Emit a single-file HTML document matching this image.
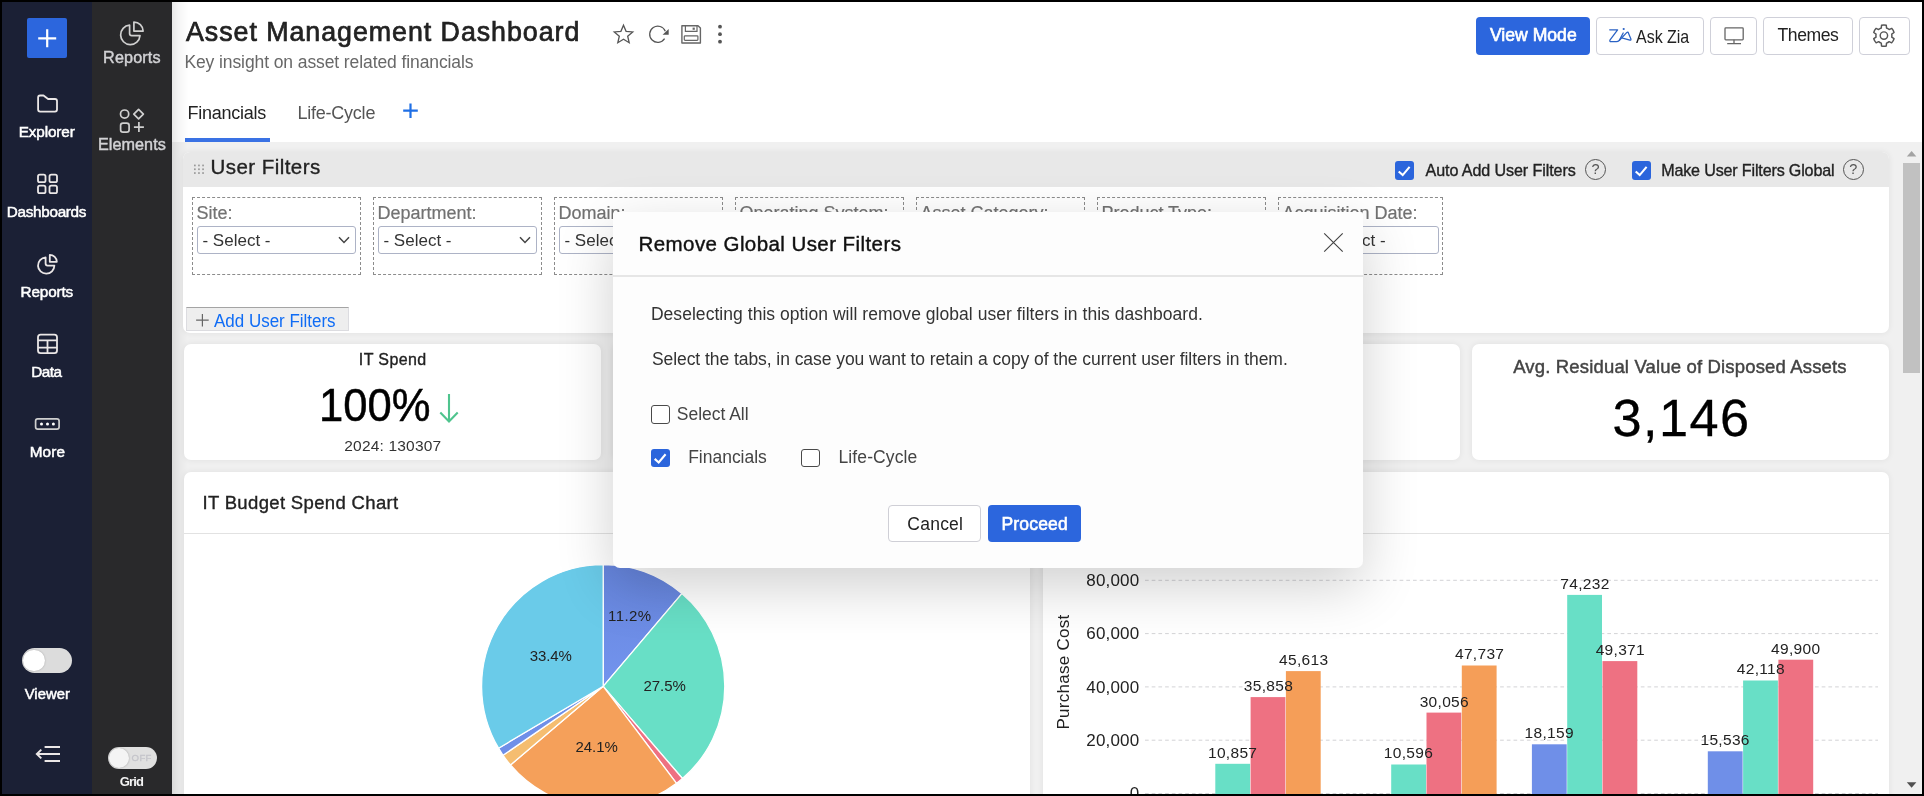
<!DOCTYPE html>
<html>
<head>
<meta charset="utf-8">
<title>Asset Management Dashboard</title>
<style>
*{box-sizing:border-box;margin:0;padding:0}
html,body{width:1924px;height:796px;overflow:hidden;background:#000;font-family:"Liberation Sans",sans-serif;}
.abs{position:absolute}
#frame{position:absolute;left:2px;top:2px;width:1920px;height:792px;background:#fff;overflow:hidden}
#page{position:absolute;left:-2px;top:-2px;width:1924px;height:796px;will-change:transform}
#nav1{position:absolute;left:2px;top:2px;width:90px;height:792px;background:#1b2035}
#nav2{position:absolute;left:92px;top:2px;width:80px;height:792px;background:#29292b}
#contentbg{position:absolute;left:172px;top:142px;width:1750px;height:652px;background:#f0f0f0}
.card{position:absolute;background:#fff;border-radius:7px;box-shadow:0 0 6px rgba(0,0,0,.07)}
.t{position:absolute;white-space:nowrap;line-height:1}
.fbox{position:absolute;top:197px;height:78px;width:169px;border:1px dashed #8c8c8c}
.fbox .lbl{position:absolute;left:3.4px;top:6px;font-size:18px;color:#727272;white-space:nowrap;line-height:1;-webkit-text-stroke:0.2px #727272}
.fbox .sel{position:absolute;left:4.1px;top:28px;width:158.7px;height:27.8px;border:1px solid #adb3c6;border-radius:3px;background:#fff}
.fbox .sel span{position:absolute;left:4.4px;top:5px;font-size:17px;color:#333;white-space:nowrap;line-height:1}
.fbox .sel svg{position:absolute;right:5px;top:8.6px}
.btn{position:absolute;top:17px;height:38px;border:1px solid #cfd0d9;border-radius:4px;background:#fff}
.cb{position:absolute;width:19px;height:19px;border-radius:3px}
.cb.on{background:#2b65dc}
.cb.off{background:#fff;border:1.3px solid #4a4a4a}
.cb svg{position:absolute;left:0;top:0}
.help{position:absolute;width:21px;height:21px;border:1.2px solid #555;border-radius:50%;color:#555;font-size:14.5px;line-height:18.5px;text-align:center}
</style>
</head>
<body>
<div id="frame"><div id="page">

<div id="contentbg"></div>
<div id="nav1"></div>
<div id="nav2"></div>

<div class="abs" style="left:172px;top:2px;width:16px;height:792px;background:linear-gradient(to right,rgba(0,0,0,.09),rgba(0,0,0,.035) 45%,rgba(0,0,0,0))"></div>
<!-- ===== NAV ICONS ===== -->
<div class="abs" style="left:27px;top:18px;width:40px;height:40px;border-radius:2px;background:#2c66dd"></div>
<svg class="abs" style="left:0;top:0" width="180" height="796" viewBox="0 0 180 796" fill="none" stroke-linecap="round" stroke-linejoin="round">
  <!-- plus -->
  <path d="M38.2 38.3H56.2M47.2 29.3V47.3" stroke="#fff" stroke-width="2.2" stroke-linecap="butt"/>
  <g stroke="#ebe7e7" stroke-width="1.8">
  <!-- folder -->
  <path d="M40.1 95.5H43.5L48.1 99H55a2 2 0 0 1 2 2V109.6a2 2 0 0 1-2 2H40.1a2 2 0 0 1-2-2V97.5a2 2 0 0 1 2-2z"/>
  <!-- dashboards -->
  <rect x="38" y="174.7" width="7.5" height="7.5" rx="1.8"/><rect x="49.5" y="174.7" width="7.5" height="7.5" rx="1.8"/>
  <rect x="38" y="185.7" width="7.5" height="7.5" rx="1.8"/><rect x="49.5" y="185.7" width="7.5" height="7.5" rx="1.8"/>
  <!-- reports -->
  <path d="M45.6 257.3A8.2 8.2 0 1 0 54.4 265.6H47.6a2 2 0 0 1-2-2z"/>
  <path d="M49.8 254.9A7 7 0 0 1 56.8 261.8H49.8z"/>
  <!-- data -->
  <rect x="38" y="334.7" width="19" height="18.5" rx="2.6"/>
  <path d="M38 340.3H57M38 347.6H57M47.5 340.3V353.2" stroke-linecap="butt"/>
  </g>
  <!-- more -->
  <rect x="35.6" y="418.8" width="23.5" height="10.4" rx="2.2" stroke="#cfcfcf" stroke-width="1.7"/>
  <circle cx="41.5" cy="424" r="1.5" fill="#fff"/><circle cx="47.5" cy="424" r="1.5" fill="#fff"/><circle cx="53.4" cy="424" r="1.5" fill="#fff"/>
  <!-- collapse -->
  <path d="M44.6 747H60M37.4 754H60M44.6 761H60M41.3 749.6L36.8 754L41.3 758.4" stroke="#ebe7e7" stroke-width="1.9" stroke-linecap="butt" stroke-linejoin="miter"/>
  <!-- nav2 reports -->
  <g stroke="#d0d0d0" stroke-width="1.7">
  <path d="M129.6 25.2A9.7 9.7 0 1 0 140 35.6H131.8a2.2 2.2 0 0 1-2.2-2.2z"/>
  <path d="M133.9 22.1A9.2 9.2 0 0 1 143.1 31.1H133.9z"/>
  <!-- elements -->
  <circle cx="124.6" cy="114.1" r="4.1"/>
  <path d="M138.6 109.3 L143.4 114.1 L138.6 118.9 L133.8 114.1Z" stroke-width="1.7"/>
  <rect x="120.6" y="123.2" width="8.5" height="8.9" rx="2.4"/>
  <path d="M133.9 127.1H143.9M138.9 122.1V132.1" stroke-linecap="butt"/>
  </g>
</svg>
<!-- viewer toggle -->
<div class="abs" style="left:21.8px;top:647.7px;width:50.4px;height:25.6px;border-radius:13px;background:#dcdcdc"></div>
<div class="abs" style="left:23.3px;top:649.7px;width:21.4px;height:21.4px;border-radius:50%;background:#fff;box-shadow:0 0 2px rgba(0,0,0,.25)"></div>
<!-- grid toggle -->
<div class="abs" style="left:107.8px;top:746.8px;width:49.3px;height:22px;border-radius:11px;background:#e0e0e0"></div>
<div class="abs" style="left:108.5px;top:747.5px;width:20.6px;height:20.6px;border-radius:50%;background:#f4f4f4;box-shadow:0 0 2px rgba(0,0,0,.3)"></div>

<!-- ===== HEADER ===== -->
<div class="abs" style="left:185px;top:138px;width:85px;height:4px;background:#3a72e4"></div>
<svg class="abs" style="left:0;top:0" width="1924" height="130" viewBox="0 0 1924 130" fill="none">
  <path d="M403.2 110.7H417.8M410.5 103.4V118" stroke="#1f6fe5" stroke-width="2.2"/>
  <path d="M623.50 25.20L626.09 31.34L632.73 31.90L627.68 36.26L629.20 42.75L623.50 39.30L617.80 42.75L619.32 36.26L614.27 31.90L620.91 31.34Z" stroke="#555" stroke-width="1.3" stroke-linejoin="miter"/>
  <!-- refresh -->
  <path d="M665.3 31.2A8.1 8.1 0 1 0 664.6 38.6" stroke="#555" stroke-width="1.25"/>
  <path d="M668.7 28.9V34.7H662.6Z" fill="#555"/>
  <!-- save -->
  <path d="M681.9 25.7H698L700.4 28.1V43H681.9Z" stroke="#666" stroke-width="1.4" stroke-linejoin="round"/>
  <path d="M685.4 25.7V31.4H697V25.7" stroke="#666" stroke-width="1.2"/>
  <rect x="692.6" y="27.6" width="2.2" height="2.2" fill="#666"/>
  <rect x="684.3" y="35.8" width="13.6" height="4.6" rx="0.8" stroke="#666" stroke-width="1.2"/>
  <path d="M682 43.2H700.4" stroke="#888" stroke-width="1"/>
  <!-- kebab -->
  <circle cx="720" cy="26.7" r="1.9" fill="#555"/><circle cx="720" cy="34.2" r="1.9" fill="#555"/><circle cx="720" cy="41.7" r="1.9" fill="#555"/>
</svg>
<div class="abs" style="left:1476px;top:17px;width:114px;height:38px;border-radius:4px;background:#2c66dd"></div>
<div class="btn" style="left:1596.4px;width:107.4px"></div>
<div class="btn" style="left:1710.2px;width:46.4px"></div>
<div class="btn" style="left:1763.4px;width:89.4px"></div>
<div class="btn" style="left:1859px;width:50.8px"></div>
<svg class="abs" style="left:0;top:0" width="1924" height="70" viewBox="0 0 1924 70" fill="none">
  <!-- zia -->
  <g stroke="#2a62c4" stroke-width="1.25" stroke-linecap="round" stroke-linejoin="round">
  <path d="M1609.7 29.8H1617.6L1609.9 40.2Q1609.5 41.6 1611 41.7H1616.4Q1618 41.7 1619.2 40.5L1626.9 32.4Q1627.8 31.7 1628.4 32.9L1630.9 39Q1631.2 40.4 1629.9 40.1L1621.7 37.8"/>
  <path d="M1623.2 33L1619.3 40.4"/>
  </g>
  <circle cx="1623.7" cy="29" r="1.1" fill="#2a62c4"/>
  <!-- monitor -->
  <rect x="1725" y="27.9" width="18.2" height="11.9" rx="0.8" stroke="#666" stroke-width="1.3"/>
  <path d="M1734 39.8V43.6M1727.2 43.6H1741" stroke="#666" stroke-width="1.3"/>
  <!-- gear -->
  <path d="M1881.30 28.04L1881.52 25.27A10.6 10.6 0 0 1 1886.28 25.27L1886.50 28.04A8.0 8.0 0 0 1 1889.15 29.56L1891.65 28.37A10.6 10.6 0 0 1 1894.04 32.50L1891.75 34.07A8.0 8.0 0 0 1 1891.75 37.13L1894.04 38.70A10.6 10.6 0 0 1 1891.65 42.83L1889.15 41.64A8.0 8.0 0 0 1 1886.50 43.16L1886.28 45.93A10.6 10.6 0 0 1 1881.52 45.93L1881.30 43.16A8.0 8.0 0 0 1 1878.65 41.64L1876.15 42.83A10.6 10.6 0 0 1 1873.76 38.70L1876.05 37.13A8.0 8.0 0 0 1 1876.05 34.07L1873.76 32.50A10.6 10.6 0 0 1 1876.15 28.37L1878.65 29.56A8.0 8.0 0 0 1 1881.30 28.04Z" stroke="#555" stroke-width="1.45" stroke-linejoin="round"/>
  <circle cx="1883.9" cy="35.6" r="3.7" stroke="#555" stroke-width="1.45"/>
</svg>

<!-- ===== USER FILTERS ===== -->
<div class="card" style="left:183.3px;top:151.8px;width:1706.2px;height:181px;overflow:hidden">
  <div class="abs" style="left:0;top:0;width:100%;height:35px;background:#e8e8e8"></div>
</div>
<svg class="abs" style="left:190px;top:160px" width="20" height="20" viewBox="190 160 20 20">
  <g fill="#999"><rect x="194" y="164.6" width="1.7" height="1.7"/><rect x="198.1" y="164.6" width="1.7" height="1.7"/><rect x="202.2" y="164.6" width="1.7" height="1.7"/>
  <rect x="194" y="168.4" width="1.7" height="1.7"/><rect x="198.1" y="168.4" width="1.7" height="1.7"/><rect x="202.2" y="168.4" width="1.7" height="1.7"/>
  <rect x="194" y="172.2" width="1.7" height="1.7"/><rect x="198.1" y="172.2" width="1.7" height="1.7"/><rect x="202.2" y="172.2" width="1.7" height="1.7"/></g>
</svg>
<div class="cb on" style="left:1395px;top:160.7px"><svg width="19" height="19" viewBox="0 0 19 19"><path d="M3.7 10.5L7.7 14.1L14.6 5.9" fill="none" stroke="#fff" stroke-width="2.1"/></svg></div>
<div class="cb on" style="left:1631.6px;top:160.7px"><svg width="19" height="19" viewBox="0 0 19 19"><path d="M3.7 10.5L7.7 14.1L14.6 5.9" fill="none" stroke="#fff" stroke-width="2.1"/></svg></div>
<div class="help" style="left:1585.1px;top:159.4px">?</div>
<div class="help" style="left:1842.9px;top:159.4px">?</div>

<div class="fbox" style="left:192px"><div class="lbl">Site:</div><div class="sel"><span>- Select -</span><svg width="12" height="8" viewBox="0 0 12 8"><path d="M1 1.2L6 6.4L11 1.2" fill="none" stroke="#444" stroke-width="1.5"/></svg></div></div>
<div class="fbox" style="left:373px"><div class="lbl">Department:</div><div class="sel"><span>- Select -</span><svg width="12" height="8" viewBox="0 0 12 8"><path d="M1 1.2L6 6.4L11 1.2" fill="none" stroke="#444" stroke-width="1.5"/></svg></div></div>
<div class="fbox" style="left:554px"><div class="lbl">Domain:</div><div class="sel"><span>- Select -</span></div></div>
<div class="fbox" style="left:735px"><div class="lbl">Operating System:</div><div class="sel"><span>- Select -</span></div></div>
<div class="fbox" style="left:916px"><div class="lbl">Asset Category:</div><div class="sel"><span>- Select -</span></div></div>
<div class="fbox" style="left:1097px"><div class="lbl">Product Type:</div><div class="sel"><span>- Select -</span></div></div>
<div class="fbox" style="left:1278px;width:165px"><div class="lbl">Acquisition Date:</div><div class="sel" style="width:156px"><span style="left:33.5px">- Select -</span></div></div>

<div class="abs" style="left:186px;top:307.2px;width:163px;height:23.8px;background:#eeeeee;border:1px solid #dcdce0;border-top:1px solid #a4a4a4"></div>
<svg class="abs" style="left:190px;top:310px" width="24" height="20" viewBox="190 310 24 20"><path d="M196.1 320.2H208.7M202.4 313.9V326.5" stroke="#666" stroke-width="1.2" fill="none"/></svg>

<!-- ===== KPI CARDS ===== -->
<div class="card" style="left:184px;top:344px;width:417.2px;height:116px"></div>
<div class="card" style="left:613.2px;top:344px;width:417.2px;height:116px"></div>
<div class="card" style="left:1042.5px;top:344px;width:417.2px;height:116px"></div>
<div class="card" style="left:1471.8px;top:344px;width:417.2px;height:116px"></div>
<svg class="abs" style="left:430px;top:385px" width="40" height="45" viewBox="430 385 40 45"><path d="M449 394V421.4M440.3 412.6L449 421.6L457.7 412.6" fill="none" stroke="#4fc48e" stroke-width="2.1"/></svg>

<!-- ===== CHART CARDS ===== -->
<div class="card" style="left:184px;top:472px;width:846.4px;height:340px"></div>
<div class="card" style="left:1042.5px;top:472px;width:846.5px;height:340px"></div>
<div class="abs" style="left:184px;top:533px;width:846.4px;height:1px;background:#e2e2e2"></div>
<div class="abs" style="left:1042.5px;top:533px;width:846.5px;height:1px;background:#e2e2e2"></div>
<svg class="abs" style="left:0;top:0" width="1924" height="796" viewBox="0 0 1924 796"><defs><linearGradient id="gB" x1="0" y1="0" x2="0" y2="1"><stop offset="0" stop-color="#6685dd"/><stop offset="1" stop-color="#7394ee"/></linearGradient></defs><path d="M603.2 686.3 L603.20 564.70 A121.6 121.6 0 0 1 681.88 593.59 Z" fill="url(#gB)" stroke="#fff" stroke-width="1.3" stroke-linejoin="round"/><path d="M603.2 686.3 L681.88 593.59 A121.6 121.6 0 0 1 682.46 778.52 Z" fill="#68dfc6" stroke="#fff" stroke-width="1.3" stroke-linejoin="round"/><path d="M603.2 686.3 L682.46 778.52 A121.6 121.6 0 0 1 676.52 783.31 Z" fill="#ee7182" stroke="#fff" stroke-width="1.3" stroke-linejoin="round"/><path d="M603.2 686.3 L676.52 783.31 A121.6 121.6 0 0 1 510.49 764.98 Z" fill="#f5a05a" stroke="#fff" stroke-width="1.3" stroke-linejoin="round"/><path d="M603.2 686.3 L510.49 764.98 A121.6 121.6 0 0 1 503.06 755.28 Z" fill="#f5bd70" stroke="#fff" stroke-width="1.3" stroke-linejoin="round"/><path d="M603.2 686.3 L503.06 755.28 A121.6 121.6 0 0 1 498.53 748.20 Z" fill="#6f8fe8" stroke="#fff" stroke-width="1.3" stroke-linejoin="round"/><path d="M603.2 686.3 L498.53 748.20 A121.6 121.6 0 0 1 603.20 564.70 Z" fill="#6acbe9" stroke="#fff" stroke-width="1.3" stroke-linejoin="round"/></svg>
<svg class="abs" style="left:0;top:0" width="1924" height="796" viewBox="0 0 1924 796"><line x1="1145" x2="1878" y1="580.3" y2="580.3" stroke="#d3d3d6" stroke-width="1" stroke-dasharray="3.7 3"/><line x1="1145" x2="1878" y1="633.6" y2="633.6" stroke="#d3d3d6" stroke-width="1" stroke-dasharray="3.7 3"/><line x1="1145" x2="1878" y1="686.9" y2="686.9" stroke="#d3d3d6" stroke-width="1" stroke-dasharray="3.7 3"/><line x1="1145" x2="1878" y1="740.2" y2="740.2" stroke="#d3d3d6" stroke-width="1" stroke-dasharray="3.7 3"/><line x1="1145" x2="1878" y1="793.5" y2="793.5" stroke="#d3d3d6" stroke-width="1" stroke-dasharray="3.7 3"/><rect x="1215.3" y="763.8" width="34.8" height="32.2" fill="#68dfc6"/><rect x="1250.6" y="697.1" width="34.8" height="98.9" fill="#ee7182"/><rect x="1285.9" y="671.1" width="34.8" height="124.9" fill="#f59e58"/><rect x="1391.2" y="764.5" width="34.8" height="31.5" fill="#68dfc6"/><rect x="1426.5" y="712.6" width="34.8" height="83.4" fill="#ee7182"/><rect x="1461.8" y="665.5" width="34.8" height="130.5" fill="#f59e58"/><rect x="1531.9" y="744.3" width="34.8" height="51.7" fill="#6f8fe8"/><rect x="1567.2" y="594.9" width="34.8" height="201.1" fill="#68dfc6"/><rect x="1602.5" y="661.1" width="34.8" height="134.9" fill="#ee7182"/><rect x="1707.8" y="751.3" width="34.8" height="44.7" fill="#6f8fe8"/><rect x="1743.1" y="680.5" width="34.8" height="115.5" fill="#68dfc6"/><rect x="1778.4" y="659.7" width="34.8" height="136.3" fill="#ee7182"/></svg>
<div class="t" style="left:1063px;top:672.2px;font-size:17px;color:#222;letter-spacing:0.27px;transform:translate(-50%,-50%) rotate(-90deg);">Purchase Cost</div>

<!-- ===== SCROLLBAR ===== -->
<div class="abs" style="left:1901px;top:142px;width:21px;height:652px;background:#f0f0f0"></div>
<div class="abs" style="left:1903px;top:163px;width:17px;height:210px;background:#c1c1c1"></div>
<svg class="abs" style="left:1901px;top:142px" width="21" height="652" viewBox="0 0 21 652"><path d="M5.8 14.5L10.6 9L15.4 14.5Z" fill="#a3a3a3"/><path d="M5.8 640.3L10.6 645.8L15.4 640.3Z" fill="#505050"/></svg>

<div class="t" style="left:18.70px;top:124px;font-size:15.3px;color:#ffffff;letter-spacing:-0.124px;-webkit-text-stroke:0.5px #ffffff;">Explorer</div>
<div class="t" style="left:6.80px;top:204px;font-size:15.3px;color:#ffffff;letter-spacing:-0.315px;-webkit-text-stroke:0.5px #ffffff;">Dashboards</div>
<div class="t" style="left:20.60px;top:284px;font-size:15.3px;color:#ffffff;letter-spacing:-0.152px;-webkit-text-stroke:0.5px #ffffff;">Reports</div>
<div class="t" style="left:31.20px;top:364px;font-size:15.3px;color:#ffffff;letter-spacing:-0.535px;-webkit-text-stroke:0.5px #ffffff;">Data</div>
<div class="t" style="left:29.70px;top:444px;font-size:15.3px;color:#ffffff;letter-spacing:0.152px;-webkit-text-stroke:0.5px #ffffff;">More</div>
<div class="t" style="left:24.70px;top:687px;font-size:14.8px;color:#ffffff;letter-spacing:0.053px;-webkit-text-stroke:0.5px #ffffff;">Viewer</div>
<div class="t" style="left:103.10px;top:49px;font-size:16.2px;color:#d2d2d5;letter-spacing:0.119px;-webkit-text-stroke:0.45px #d2d2d5;">Reports</div>
<div class="t" style="left:98.00px;top:136px;font-size:16.2px;color:#d2d2d5;letter-spacing:0.045px;-webkit-text-stroke:0.45px #d2d2d5;">Elements</div>
<div class="t" style="left:119.70px;top:775px;font-size:13px;color:#f4f4f4;letter-spacing:-0.794px;font-weight:bold;">Grid</div>
<div class="t" style="left:131.60px;top:753px;font-size:9.6px;color:#c4c4ca;letter-spacing:0.339px;-webkit-text-stroke:0.3px #c4c4ca;">OFF</div>
<div class="t" style="left:186.00px;top:19px;font-size:26.8px;color:#222;letter-spacing:0.956px;-webkit-text-stroke:0.7px #222;">Asset Management Dashboard</div>
<div class="t" style="left:184.40px;top:54px;font-size:17.5px;color:#686868;letter-spacing:-0.096px;">Key insight on asset related financials</div>
<div class="t" style="left:187.60px;top:104px;font-size:18px;color:#222;letter-spacing:-0.271px;">Financials</div>
<div class="t" style="left:297.40px;top:104px;font-size:18px;color:#555;letter-spacing:-0.224px;">Life-Cycle</div>
<div class="t" style="left:1489.90px;top:27px;font-size:17.6px;color:#fff;letter-spacing:0.009px;-webkit-text-stroke:0.65px #fff;">View Mode</div>
<div class="t" style="left:1636.30px;top:29px;font-size:17.7px;color:#222;transform:scaleX(0.9031);transform-origin:0 0;">Ask Zia</div>
<div class="t" style="left:1777.60px;top:27px;font-size:17.6px;color:#222;letter-spacing:-0.471px;">Themes</div>
<div class="t" style="left:210.60px;top:157px;font-size:20.5px;color:#222;letter-spacing:0.433px;-webkit-text-stroke:0.35px #222;">User Filters</div>
<div class="t" style="left:1425.60px;top:162px;font-size:16.1px;color:#222;letter-spacing:-0.095px;-webkit-text-stroke:0.35px #222;">Auto Add User Filters</div>
<div class="t" style="left:1661.20px;top:162px;font-size:16.1px;color:#222;letter-spacing:-0.161px;-webkit-text-stroke:0.35px #222;">Make User Filters Global</div>
<div class="t" style="left:214.00px;top:312px;font-size:18px;color:#0f6cf5;transform:scaleX(0.9424);transform-origin:0 0;">Add User Filters</div>
<div class="t" style="left:358.80px;top:352px;font-size:16px;color:#222;letter-spacing:0.396px;-webkit-text-stroke:0.35px #222;">IT Spend</div>
<div class="t" style="left:318.72px;top:381px;font-size:47px;color:#000;transform:scaleX(0.9277);transform-origin:0 0;-webkit-text-stroke:0.5px #000;">100%</div>
<div class="t" style="left:344.30px;top:438px;font-size:15.5px;color:#333;letter-spacing:0.182px;">2024: 130307</div>
<div class="t" style="left:1513.20px;top:358px;font-size:18.5px;color:#444;letter-spacing:0.164px;-webkit-text-stroke:0.45px #444;">Avg. Residual Value of Disposed Assets</div>
<div class="t" style="left:1612.60px;top:392px;font-size:52.3px;color:#000;letter-spacing:1.379px;-webkit-text-stroke:0.3px #000;">3,146</div>
<div class="t" style="left:202.40px;top:494px;font-size:18.5px;color:#222;letter-spacing:0.346px;-webkit-text-stroke:0.35px #222;">IT Budget Spend Chart</div>
<div class="t" style="left:638.50px;top:234px;font-size:20.5px;color:#111;letter-spacing:0.427px;-webkit-text-stroke:0.4px #111;z-index:12;">Remove Global User Filters</div>
<div class="t" style="left:650.90px;top:306px;font-size:17.5px;color:#333;letter-spacing:0.045px;z-index:12;">Deselecting this option will remove global user filters in this dashboard.</div>
<div class="t" style="left:651.90px;top:351px;font-size:17.5px;color:#333;letter-spacing:-0.060px;z-index:12;">Select the tabs, in case you want to retain a copy of the current user filters in them.</div>
<div class="t" style="left:676.80px;top:406px;font-size:17.5px;color:#444;letter-spacing:-0.029px;z-index:12;">Select All</div>
<div class="t" style="left:688.20px;top:449px;font-size:17.5px;color:#444;letter-spacing:-0.015px;z-index:12;">Financials</div>
<div class="t" style="left:838.50px;top:449px;font-size:17.5px;color:#444;letter-spacing:0.115px;z-index:12;">Life-Cycle</div>
<div class="t" style="left:907.30px;top:516px;font-size:17.5px;color:#222;letter-spacing:0.243px;z-index:12;">Cancel</div>
<div class="t" style="left:1001.40px;top:516px;font-size:17.5px;color:#fff;letter-spacing:0.192px;-webkit-text-stroke:0.6px #fff;z-index:12;">Proceed</div>
<div class="t" style="left:608.00px;top:608px;font-size:15px;color:#222;letter-spacing:0.430px;">11.2%</div>
<div class="t" style="left:529.80px;top:648px;font-size:15px;color:#222;letter-spacing:-0.099px;">33.4%</div>
<div class="t" style="left:643.60px;top:678px;font-size:15px;color:#222;letter-spacing:-0.099px;">27.5%</div>
<div class="t" style="left:575.60px;top:739px;font-size:15px;color:#222;letter-spacing:-0.099px;">24.1%</div>
<div class="t" style="left:1086.30px;top:572px;font-size:17px;color:#222;letter-spacing:0.172px;">80,000</div>
<div class="t" style="left:1086.30px;top:625px;font-size:17px;color:#222;letter-spacing:0.172px;">60,000</div>
<div class="t" style="left:1086.30px;top:679px;font-size:17px;color:#222;letter-spacing:0.172px;">40,000</div>
<div class="t" style="left:1086.30px;top:732px;font-size:17px;color:#222;letter-spacing:0.172px;">20,000</div>
<div class="t" style="left:1129.70px;top:785px;font-size:17px;color:#222;">0</div>
<div class="t" style="left:1207.95px;top:745px;font-size:15.5px;color:#222;letter-spacing:0.321px;">10,857</div>
<div class="t" style="left:1243.74px;top:678px;font-size:15.5px;color:#222;letter-spacing:0.328px;">35,858</div>
<div class="t" style="left:1279.04px;top:652px;font-size:15.5px;color:#222;letter-spacing:0.328px;">45,613</div>
<div class="t" style="left:1383.85px;top:745px;font-size:15.5px;color:#222;letter-spacing:0.321px;">10,596</div>
<div class="t" style="left:1419.64px;top:694px;font-size:15.5px;color:#222;letter-spacing:0.328px;">30,056</div>
<div class="t" style="left:1454.94px;top:646px;font-size:15.5px;color:#222;letter-spacing:0.328px;">47,737</div>
<div class="t" style="left:1524.55px;top:725px;font-size:15.5px;color:#222;letter-spacing:0.321px;">18,159</div>
<div class="t" style="left:1560.34px;top:576px;font-size:15.5px;color:#222;letter-spacing:0.328px;">74,232</div>
<div class="t" style="left:1595.64px;top:642px;font-size:15.5px;color:#222;letter-spacing:0.328px;">49,371</div>
<div class="t" style="left:1700.45px;top:732px;font-size:15.5px;color:#222;letter-spacing:0.321px;">15,536</div>
<div class="t" style="left:1736.83px;top:661px;font-size:15.5px;color:#222;letter-spacing:0.319px;">42,118</div>
<div class="t" style="left:1771.02px;top:641px;font-size:15.5px;color:#222;letter-spacing:0.335px;">49,900</div>

<!-- ===== MODAL ===== -->
<div class="abs" style="left:613px;top:212px;width:750px;height:356px;background:#fdfdfd;border-radius:2px 2px 7px 7px;box-shadow:0 18px 56px rgba(0,0,0,.19);z-index:10"></div>
<div class="abs" style="left:613px;top:275px;width:750px;height:1.6px;background:#e6e6e6;z-index:11"></div>
<svg class="abs" style="left:1320px;top:228px;z-index:11" width="30" height="30" viewBox="1320 228 30 30"><path d="M1324.2 233.3L1342.7 251.6M1342.7 233.3L1324.2 251.6" stroke="#444" stroke-width="1.15" fill="none"/></svg>
<div class="cb off" style="left:651px;top:405px;height:18.8px;z-index:11"></div>
<div class="cb on" style="left:651px;top:449px;height:18px;z-index:11"><svg width="19" height="19" viewBox="0 0.6 19 19"><path d="M3.7 10.5L7.7 14.1L14.6 5.9" fill="none" stroke="#fff" stroke-width="2.1"/></svg></div>
<div class="cb off" style="left:801px;top:449px;height:18px;z-index:11"></div>
<div class="abs" style="left:888px;top:505px;width:93px;height:37px;border:1px solid #cfcfd6;border-radius:4px;background:#fff;z-index:11"></div>
<div class="abs" style="left:988px;top:505px;width:93px;height:37px;border-radius:4px;background:#2c66dd;z-index:11"></div>

</div></div>
</body>
</html>
